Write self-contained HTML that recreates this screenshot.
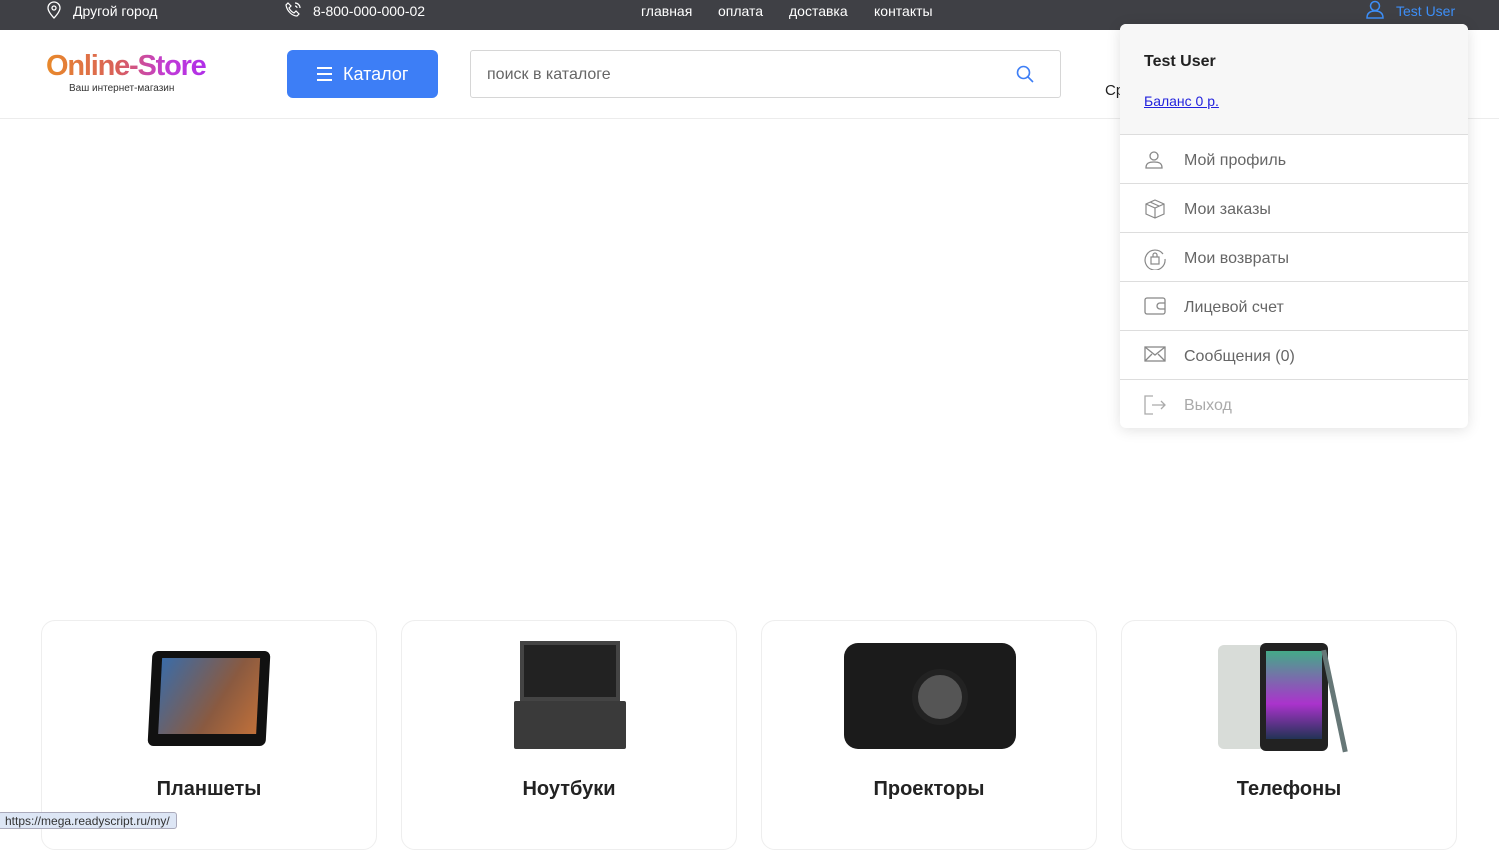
<!DOCTYPE html>
<html><head><meta charset="utf-8"><style>
*{box-sizing:border-box;margin:0;padding:0}
body{width:1499px;height:827px;overflow:hidden;background:#fff;font-family:"Liberation Sans",sans-serif;position:relative;color:#222}
.top{position:absolute;left:0;top:0;width:1499px;height:30px;background:#3f4045;color:#fff;font-size:14px}
.top span{position:absolute;top:3px}
.hdr{position:absolute;top:30px;left:0;width:1499px;height:89px;border-bottom:1px solid #ececec}
.logo{position:absolute;left:46px;top:20px;font-size:29px;font-weight:bold;letter-spacing:-1.2px;background:linear-gradient(90deg,#e8892a,#d9605a 45%,#c13bd6 75%,#b02ee8);-webkit-background-clip:text;color:transparent}
.sub{position:absolute;left:69px;top:53px;font-size:10px;color:#333}
.cat{position:absolute;left:287px;top:20px;width:151px;height:48px;background:#3d7ef6;border-radius:6px;color:#fff;font-size:18px;padding:14px 0 0 56px}
.ham{position:absolute;left:30px;top:17px;width:15px}
.ham i{display:block;height:1.6px;background:#fff;margin-bottom:4.5px}
.search{position:absolute;left:470px;top:20px;width:591px;height:48px;border:1px solid #d6d6d6;border-radius:3px;color:#666;font-size:16px;padding:15px 16px}
.dd{position:absolute;left:1120px;top:24px;width:348px;height:404px;background:#fff;border-radius:6px;box-shadow:0 2px 14px rgba(0,0,0,.12);overflow:hidden}
.ddh{height:111px;background:#f7f7f7;border-bottom:1px solid #ddd;padding:29px 24px}
.ddh b{font-size:16px;display:block;color:#222}
.ddh a{display:block;margin-top:22px;color:#2222dd;font-size:14px;text-decoration:underline}
.it{height:49px;border-bottom:1px solid #ddd;position:relative;font-size:16px;color:#666;padding:17px 0 0 64px}
.it svg{position:absolute;left:24px;top:15px}
.card{position:absolute;top:620px;width:336px;height:230px;border:1px solid #eee;border-radius:14px}
.card .t{position:absolute;top:157px;width:100%;text-align:center;font-size:20px;font-weight:bold;color:#222}
.status{position:absolute;left:-2px;top:812px;height:17px;background:#dde6f5;border:1px solid #aab;border-radius:3px;font-size:12px;padding:1px 6px;color:#333}
</style></head><body>
<div class="top">
<svg style="position:absolute;left:46px;top:1px" width="16" height="18" viewBox="0 0 16 18" fill="none" stroke="#fff" stroke-width="1.3"><path d="M8 17s-6-6-6-10a6 6 0 0112 0c0 4-6 10-6 10z"/><circle cx="8" cy="7" r="2"/></svg>
<span style="left:73px">Другой город</span>
<svg style="position:absolute;left:285px;top:2px" width="17" height="16" viewBox="0 0 17 16" fill="none" stroke="#fff" stroke-width="1.2"><path d="M3 1l3 3-2 2c1 2 3 4 5 5l2-2 3 3-2 2C7 14 2 9 1 3z"/><path d="M10 1a5 5 0 015 5M10 4a2 2 0 012 2"/></svg>
<span style="left:313px">8-800-000-000-02</span>
<span style="left:641px">главная</span><span style="left:718px">оплата</span><span style="left:789px">доставка</span><span style="left:874px">контакты</span>
<svg style="position:absolute;left:1366px;top:0px" width="18" height="19" viewBox="0 0 18 19" fill="none" stroke="#3d8ef6" stroke-width="1.5"><circle cx="9" cy="6" r="4.5"/><path d="M1 18c0-5 3-7 8-7s8 2 8 7z"/></svg>
<span style="left:1396px;color:#3d8ef6">Test User</span>
</div>
<div class="hdr">
<div class="logo">Online-Store</div><div class="sub">Ваш интернет-магазин</div>
<div class="cat"><div class="ham"><i></i><i></i><i></i></div>Каталог</div>
<div class="search">поиск в каталоге
<svg style="position:absolute;right:26px;top:14px" width="18" height="18" viewBox="0 0 18 18" fill="none" stroke="#3d7ef6" stroke-width="1.6"><circle cx="7.5" cy="7.5" r="6"/><path d="M12 12l5 5"/></svg></div>
<span style="position:absolute;left:1105px;top:52px;font-size:15px">Ср</span>
</div>
<div class="dd">
<div class="ddh"><b>Test User</b><a>Баланс 0 р.</a></div>
<div class="it"><svg width="20" height="20" viewBox="0 0 20 20" fill="none" stroke="#888" stroke-width="1.3"><circle cx="10" cy="6" r="4"/><path d="M2 18c0-5 3-6 8-6s8 1 8 6z"/></svg>Мой профиль</div>
<div class="it"><svg width="22" height="20" viewBox="0 0 22 20" fill="none" stroke="#888" stroke-width="1.2"><path d="M11 1l9 4v10l-9 4-9-4V5z M2 5l9 4 9-4 M11 9v10 M6 3l9 4"/></svg>Мои заказы</div>
<div class="it"><svg width="22" height="22" viewBox="0 0 22 22" fill="none" stroke="#888" stroke-width="1.2"><path d="M19 6A10 10 0 1021 11"/><rect x="7" y="9" width="8" height="7"/><path d="M9 9V7a2 2 0 014 0v2"/></svg>Мои возвраты</div>
<div class="it"><svg width="22" height="18" viewBox="0 0 22 18" fill="none" stroke="#888" stroke-width="1.3"><rect x="1" y="1" width="20" height="16" rx="2"/><path d="M21 6h-5a3 3 0 000 6h5"/></svg>Лицевой счет</div>
<div class="it"><svg width="22" height="16" viewBox="0 0 22 16" fill="none" stroke="#888" stroke-width="1.3"><rect x="1" y="1" width="20" height="14"/><path d="M1 1l10 8 10-8M1 15l7-7M21 15l-7-7"/></svg>Сообщения (0)</div>
<div class="it" style="color:#aaa;border:0"><svg width="22" height="20" viewBox="0 0 22 20" fill="none" stroke="#aaa" stroke-width="1.3"><path d="M9 1H1v18h8M8 10h13M17 6l4 4-4 4"/></svg>Выход</div>
</div>
<div class="card" style="left:41px"><div style="position:absolute;left:108px;top:30px;width:118px;height:95px;background:#111;border-radius:6px;transform:skewX(-3deg)"><div style="margin:7px 10px;height:76px;background:linear-gradient(120deg,#3a6ca8,#8a5a40 60%,#c0703a)"></div></div><div class="t">Планшеты</div></div>
<div class="card" style="left:401px"><div style="position:absolute;left:118px;top:20px;width:100px;height:60px;background:#222;border:4px solid #444"></div><div style="position:absolute;left:112px;top:80px;width:112px;height:48px;background:#3a3a3a;border-radius:2px"></div><div class="t">Ноутбуки</div></div>
<div class="card" style="left:761px"><div style="position:absolute;left:82px;top:22px;width:172px;height:106px;background:#1b1b1b;border-radius:14px"></div><div style="position:absolute;left:150px;top:48px;width:56px;height:56px;border-radius:50%;background:#555;border:6px solid #222"></div><div class="t">Проекторы</div></div>
<div class="card" style="left:1121px"><div style="position:absolute;left:96px;top:24px;width:50px;height:104px;background:#d8dcd8;border-radius:6px"></div><div style="position:absolute;left:138px;top:22px;width:68px;height:108px;background:#222;border-radius:6px"><div style="margin:8px 6px;height:88px;background:linear-gradient(#4a8,#a3c 60%,#235)"></div></div><div style="position:absolute;left:210px;top:28px;width:5px;height:104px;background:#677;transform:rotate(-12deg)"></div><div class="t">Телефоны</div></div>
<div class="status">https://mega.readyscript.ru/my/</div>
</body></html>
